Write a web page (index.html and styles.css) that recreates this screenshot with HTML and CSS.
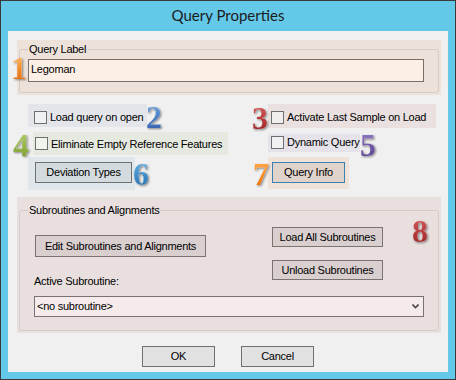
FILE: index.html
```html
<!DOCTYPE html>
<html>
<head>
<meta charset="utf-8">
<title>Query Properties</title>
<link rel="stylesheet" href="styles.css">
</head>
<body>
<div class="window">
  <div class="titlebar">Query Properties</div>
  <div class="client">
    <div class="tint tint-query">
      <fieldset class="group group-query">
        <legend>Query Label</legend>
        <div class="textbox">Legoman</div>
      </fieldset>
    </div>

    <div class="options">
      <label class="tint opt opt-load"><span class="cb"></span>Load query on open</label>
      <label class="tint opt opt-activate"><span class="cb"></span>Activate Last Sample on Load</label>
      <label class="tint opt opt-elim"><span class="cb"></span>Eliminate Empty Reference Features</label>
      <label class="tint opt opt-dyn"><span class="cb"></span>Dynamic Query</label>
      <div class="tint btnwrap wrap-dev"><button class="btn btn-dev">Deviation Types</button></div>
      <div class="tint btnwrap wrap-info"><button class="btn btn-info">Query Info</button></div>
    </div>

    <div class="tint tint-sub">
      <fieldset class="group group-sub">
        <legend>Subroutines and Alignments</legend>
        <div class="sub-grid">
          <div class="sub-left">
            <button class="btn btn-sub btn-edit">Edit Subroutines and Alignments</button>
            <div class="field-label">Active Subroutine:</div>
          </div>
          <div class="sub-right">
            <button class="btn btn-sub btn-load">Load All Subroutines</button>
            <button class="btn btn-sub btn-load">Unload Subroutines</button>
          </div>
        </div>
        <div class="select">
          <span>&lt;no subroutine&gt;</span>
          <svg class="chev" width="7" height="5" viewBox="0 0 7 5"><path d="M0.5 0.5 L3.5 3.5 L6.5 0.5" fill="none" stroke="#4a4a4a" stroke-width="1.6"/></svg>
        </div>
      </fieldset>
    </div>

    <div class="footer">
      <button class="btn btn-foot">OK</button>
      <button class="btn btn-foot">Cancel</button>
    </div>
  </div>

  <span class="badge b1">1</span>
  <span class="badge b2">2</span>
  <span class="badge b3">3</span>
  <span class="badge b4">4</span>
  <span class="badge b5">5</span>
  <span class="badge b6">6</span>
  <span class="badge b7">7</span>
  <span class="badge b8">8</span>
</div>
</body>
</html>
```

FILE: styles.css
```css
* { box-sizing: border-box; }
html, body { margin: 0; padding: 0; }
body {
  width: 456px; height: 380px; overflow: hidden;
  font-family: "Liberation Sans", Arial, sans-serif;
  font-size: 11px; letter-spacing: -0.25px; color: #000;
  background: #ffffff;
}
.window {
  position: relative;
  width: 456px; height: 380px;
  background: #64c8e9;
  border: 1px solid #3a3a3a;
  display: flex; flex-direction: column;
}
.titlebar {
  height: 30px;
  padding-bottom: 2px;
  text-align: center;
  font-family: Lato, "Noto Sans", sans-serif;
  font-size: 15px; line-height: 28px;
  letter-spacing: 0;
  color: #1b1b1b;
}
.client {
  margin: 0 7px;
  height: 341px;
  background: #f0f0f0;
  padding: 9px 7px 0 9px;
  display: flex; flex-direction: column;
}
.tint-query {
  width: 424px; height: 55px;
  padding: 3px 2px 2px 2px;
  background: #ede2da;
}
.group {
  margin: 0;
  border: 1px solid #d5ccc7;
  border-radius: 3px;
  padding: 4px 13px 10px 8px;
  min-width: 0;
}
.group legend {
  padding: 0 1px;
  line-height: 12px;
}
.textbox {
  width: 396px; height: 23px;
  border: 1px solid #7a6e68;
  background: #fcefe6;
  padding: 0 0 2px 2px;
  line-height: 19px;
}
.options {
  margin: 9px 0 0 11px;
  display: grid;
  grid-template-columns: 240px 1fr;
  grid-template-rows: 24px 27px 35px;
  align-items: start;
}
.opt {
  display: flex; align-items: center;
  white-space: nowrap;
}
.cb {
  width: 13px; height: 13px;
  border: 1px solid #6f6f6f;
  background: rgba(255,255,255,0.45);
  margin-right: 3px;
  flex: none;
}
.opt-load { width: 119px; height: 23px; padding: 3px 0 0 6px; background: #e3e5eb; }
.opt-activate { width: 168px; height: 24px; padding: 2px 0 0 3px; background: #eae0e0; }
.opt-elim { margin: 4px 0 0 5px; width: 195px; height: 23px; padding-left: 2px; background: #e6e9df; }
.opt-dyn { margin-top: 6px; width: 92px; height: 18px; padding: 0 0 2px 3px; background: #e5e3e9; }
.btnwrap { margin-top: 2px; }
.wrap-dev { width: 107px; height: 33px; padding: 5px 0 0 7px; background: #dfe7ea; }
.wrap-info { width: 81px; height: 32px; padding: 5px 0 0 4px; background: #eee2d9; }
.btn {
  font: inherit; letter-spacing: inherit; color: #000;
  border: 1px solid #707070;
  background: #e1e1e1;
  padding: 0; margin: 0;
  height: 21px;
  line-height: 19px;
  border-radius: 0;
}
.btn-dev { width: 97px; background: #d4dbde; }
.btn-info { width: 73px; background: #e0d3cb; border-color: #3c7fb1; }
.tint-sub {
  margin-top: 7px;
  width: 424px; height: 136px;
  padding: 7px 2px 2px 2px;
  background: #e8dfde;
}
.group-sub { height: 127px; padding: 11px 13px 0 8px; }
.sub-grid {
  margin-left: 6px;
  display: grid;
  grid-template-columns: 238px auto;
  align-items: start;
}
.sub-left { display: flex; flex-direction: column; align-items: flex-start; }
.btn-sub { background: #d9cfcf; border-color: #7b7272; }
.btn-edit { width: 171px; height: 22px; margin: 8px 0 0 1px; line-height: 20px; }
.field-label { margin-top: 18px; line-height: 12px; }
.sub-right { display: flex; flex-direction: column; gap: 13px; align-items: flex-start; }
.btn-load { width: 111px; height: 20px; line-height: 18px; }
.select {
  margin: 9px 0 0 6px;
  width: 390px; height: 21px;
  border: 1px solid #7a7272;
  background: #f5ebea;
  display: flex; align-items: center; justify-content: space-between;
  padding: 0 4px 1px 2px;
}
.chev { display: block; margin-top: 1px; }
.footer {
  margin-top: 13px;
  display: flex; justify-content: center;
  gap: 26px;
  padding-right: 2px;
}
.btn-foot { width: 73px; }

.badge {
  position: absolute;
  font-family: "Liberation Serif", serif;
  font-weight: bold;
  font-size: 32px; line-height: 32px;
  letter-spacing: 0;
  color: transparent;
  -webkit-background-clip: text;
  background-clip: text;
  filter: drop-shadow(0 0 0.7px rgba(255,255,255,0.95)) drop-shadow(1px 1px 1px rgba(0,0,0,0.45));
}
.b1 { left: 10px; top: 51px; background-image: linear-gradient(#ffc070, #f08a2a 55%, #e06a10); }
.b2 { left: 145px; top: 100px; background-image: linear-gradient(#7aaee4, #4a7cc4 55%, #2f5ea8); }
.b3 { left: 251px; top: 101px; background-image: linear-gradient(#d86060, #b83838 55%, #982424); }
.b4 { left: 12px; top: 128px; background-image: linear-gradient(#b4d070, #94b448 55%, #7a9a30); }
.b5 { left: 359px; top: 128px; background-image: linear-gradient(#9a80c8, #7058a8 55%, #553d8a); }
.b6 { left: 132px; top: 157px; background-image: linear-gradient(#70b8e6, #3f8cc8 55%, #2a6eaa); }
.b7 { left: 252px; top: 157px; background-image: linear-gradient(#ffb050, #f88a20 55%, #e86a08); }
.b8 { left: 411px; top: 214px; background-image: linear-gradient(#d86060, #b83a3a 55%, #962626); }
```
